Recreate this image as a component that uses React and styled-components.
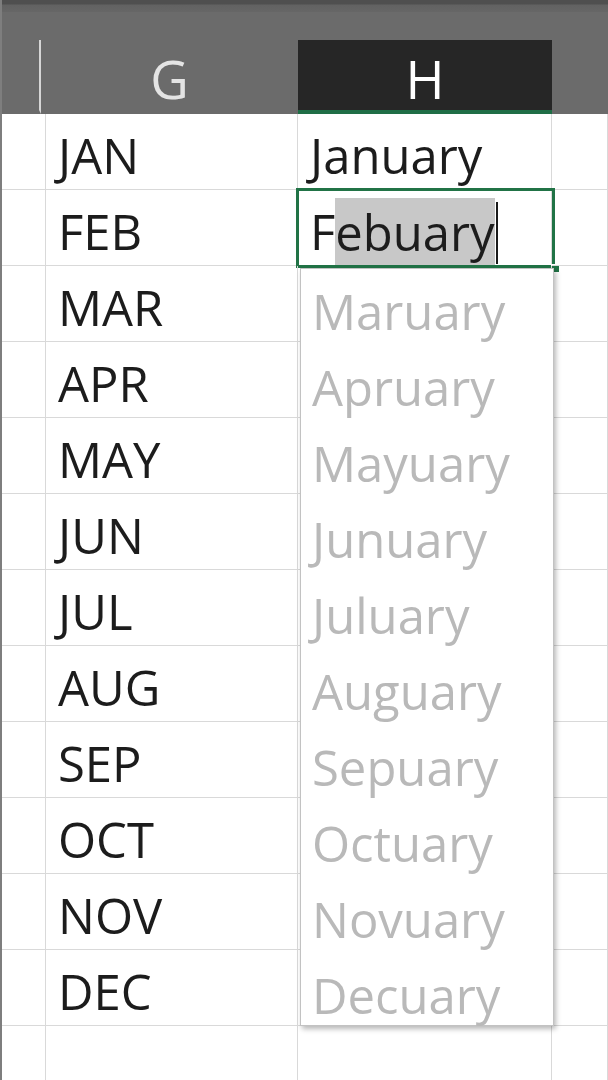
import React from "react";
import styled, { createGlobalStyle } from "styled-components";

const Global = createGlobalStyle`
  html, body { margin: 0; padding: 0; background: #ffffff; }
  body { font-family: "Open Sans", "Liberation Sans", sans-serif; overflow: hidden; }
  * { box-sizing: border-box; }
`;

const Page = styled.div`
  width: 608px;
  height: 1080px;
  border-left: 2px solid #7e7e7e;
  display: flex;
  flex-direction: column;
  overflow: hidden;
`;

const TopBand = styled.div`
  flex: none;
  height: 12px;
  background: linear-gradient(#4f4f4f 0, #4f4f4f 4px, #626262 5px, #666666 100%);
`;

const HeaderRow = styled.div`
  flex: none;
  height: 102px;
  background: #6b6b6b;
  padding-top: 28px;
  display: grid;
  grid-template-columns: 39px 257px 254px 1fr;
`;

const HeaderCell = styled.div`
  display: flex;
  align-items: center;
  justify-content: center;
  padding-top: 6px;
  font-size: 53px;
  font-weight: 400;
  line-height: 1;
  color: ${(p) => (p.$active ? "#ffffff" : "#e4e4e4")};
  background: ${(p) => (p.$active ? "#262626" : "transparent")};
  border-bottom: 4px solid ${(p) => (p.$active ? "#1f6e46" : "transparent")};
  border-right: ${(p) => (p.$divider ? "2px solid #d6d6d6" : "none")};
  height: 74px;
  align-self: end;
`;

const Body = styled.div`
  position: relative;
  flex: none;
  display: grid;
  grid-template-columns: 44px 252px 254px 1fr;
  grid-auto-rows: 76px;
  align-content: start;
`;

const Cell = styled.div`
  position: relative;
  border-right: 1px solid #d9d9d9;
  border-bottom: 1px solid #d9d9d9;
  display: flex;
  align-items: center;
  padding: 8px 0 0 12px;
  font-size: 49px;
  line-height: 1;
  color: #1c1c1c;
  white-space: nowrap;
`;

const ActiveBox = styled.div`
  position: absolute;
  left: -2px;
  top: -2px;
  right: -4px;
  bottom: -3px;
  border: 3px solid #217346;
  pointer-events: none;
`;

const FillHandle = styled.div`
  position: absolute;
  right: -8px;
  bottom: -8px;
  width: 9px;
  height: 9px;
  background: #217346;
  border: 1px solid #ffffff;
`;

const Selected = styled.span`
  background: #c8c8c8;
  padding: 10px 0 9px;
`;

const Caret = styled.span`
  display: inline-block;
  width: 2px;
  height: 62px;
  background: #1a1a1a;
  margin-left: 1px;
  transform: translateY(1px);
`;

const Preview = styled.div`
  position: absolute;
  left: 298px;
  top: 154px;
  width: 254px;
  height: 758px;
  background: #ffffff;
  border: 1px solid #c2c2c2;
  box-shadow: 2px 3px 5px rgba(0, 0, 0, 0.28);
  display: flex;
  flex-direction: column;
`;

const PreviewItem = styled.div`
  height: 76px;
  flex: none;
  display: flex;
  align-items: center;
  padding: 8px 0 0 11px;
  font-size: 49px;
  line-height: 1;
  color: #b9b9b9;
  white-space: nowrap;
`;

const abbr = ["JAN", "FEB", "MAR", "APR", "MAY", "JUN", "JUL", "AUG", "SEP", "OCT", "NOV", "DEC"];
const suggestions = ["Maruary", "Apruary", "Mayuary", "Junuary", "Juluary", "Auguary", "Sepuary", "Octuary", "Novuary", "Decuary"];

export default function App() {
  const rows = [...abbr, ""];
  return (
    <>
      <Global />
      <Page>
        <TopBand />
        <HeaderRow>
          <HeaderCell $divider />
          <HeaderCell>G</HeaderCell>
          <HeaderCell $active>H</HeaderCell>
          <HeaderCell />
        </HeaderRow>
        <Body>
          {rows.map((a, i) => (
            <React.Fragment key={i}>
              <Cell />
              <Cell>{a}</Cell>
              {i === 0 ? (
                <Cell>January</Cell>
              ) : i === 1 ? (
                <Cell>
                  F<Selected>ebuary</Selected>
                  <Caret />
                  <ActiveBox>
                    <FillHandle />
                  </ActiveBox>
                </Cell>
              ) : (
                <Cell />
              )}
              <Cell />
            </React.Fragment>
          ))}
          <Preview>
            {suggestions.map((s) => (
              <PreviewItem key={s}>{s}</PreviewItem>
            ))}
          </Preview>
        </Body>
      </Page>
    </>
  );
}
